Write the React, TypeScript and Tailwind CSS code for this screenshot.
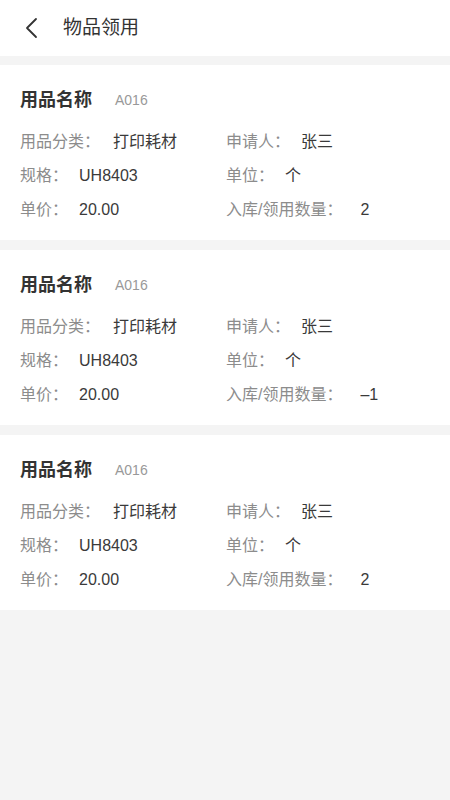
const items = [
  { category: "打印耗材", applicant: "张三", spec: "UH8403", unit: "个", price: "20.00", qty: "2" },
  { category: "打印耗材", applicant: "张三", spec: "UH8403", unit: "个", price: "20.00", qty: "–1" },
  { category: "打印耗材", applicant: "张三", spec: "UH8403", unit: "个", price: "20.00", qty: "2" },
];

function Field({ label, value, gap }: { label: string; value: string; gap: string }) {
  return (
    <div className="flex h-[34px] items-center">
      <span className="text-[#8c8c8c]">{label}</span>
      <span className={`text-[#3a3a3a] ${gap}`}>{value}</span>
    </div>
  );
}

export default function App() {
  return (
    <div
      className="min-h-[800px] w-full bg-[#f4f4f4] text-[16px]"
      style={{ fontFamily: '"Liberation Sans", "Noto Sans CJK SC", sans-serif' }}
    >
      <header className="flex h-[56px] items-center bg-white">
        <button type="button" className="ml-[20px] flex size-[24px] items-center justify-center">
          <svg width="14" height="22" viewBox="0 0 14 22" fill="none">
            <path d="M11 2 L2 11 L11 20" stroke="#333" strokeWidth="1.8" strokeLinecap="round" strokeLinejoin="round" />
          </svg>
        </button>
        <h1 className="ml-[19px] text-[19px] text-[#333]">物品领用</h1>
      </header>

      <div className="flex flex-col gap-[10px] pt-[9px]">
        {items.map((item, i) => (
          <div key={i} className="bg-white pb-[13px] pl-[20px] pt-[22px]">
            <div className="flex h-[26px] items-center">
              <span className="text-[18px] font-bold text-[#333]">用品名称</span>
              <span className="ml-[23px] text-[14px] text-[#999]">A016</span>
            </div>
            <div className="mt-[12px] grid grid-cols-[206px_1fr]">
              <Field label="用品分类：" value={item.category} gap="ml-[13px]" />
              <Field label="申请人：" value={item.applicant} gap="ml-[11px]" />
              <Field label="规格：" value={item.spec} gap="ml-[11px]" />
              <Field label="单位：" value={item.unit} gap="ml-[11px]" />
              <Field label="单价：" value={item.price} gap="ml-[11px]" />
              <Field label="入库/领用数量：" value={item.qty} gap="ml-[18px]" />
            </div>
          </div>
        ))}
      </div>
    </div>
  );
}
